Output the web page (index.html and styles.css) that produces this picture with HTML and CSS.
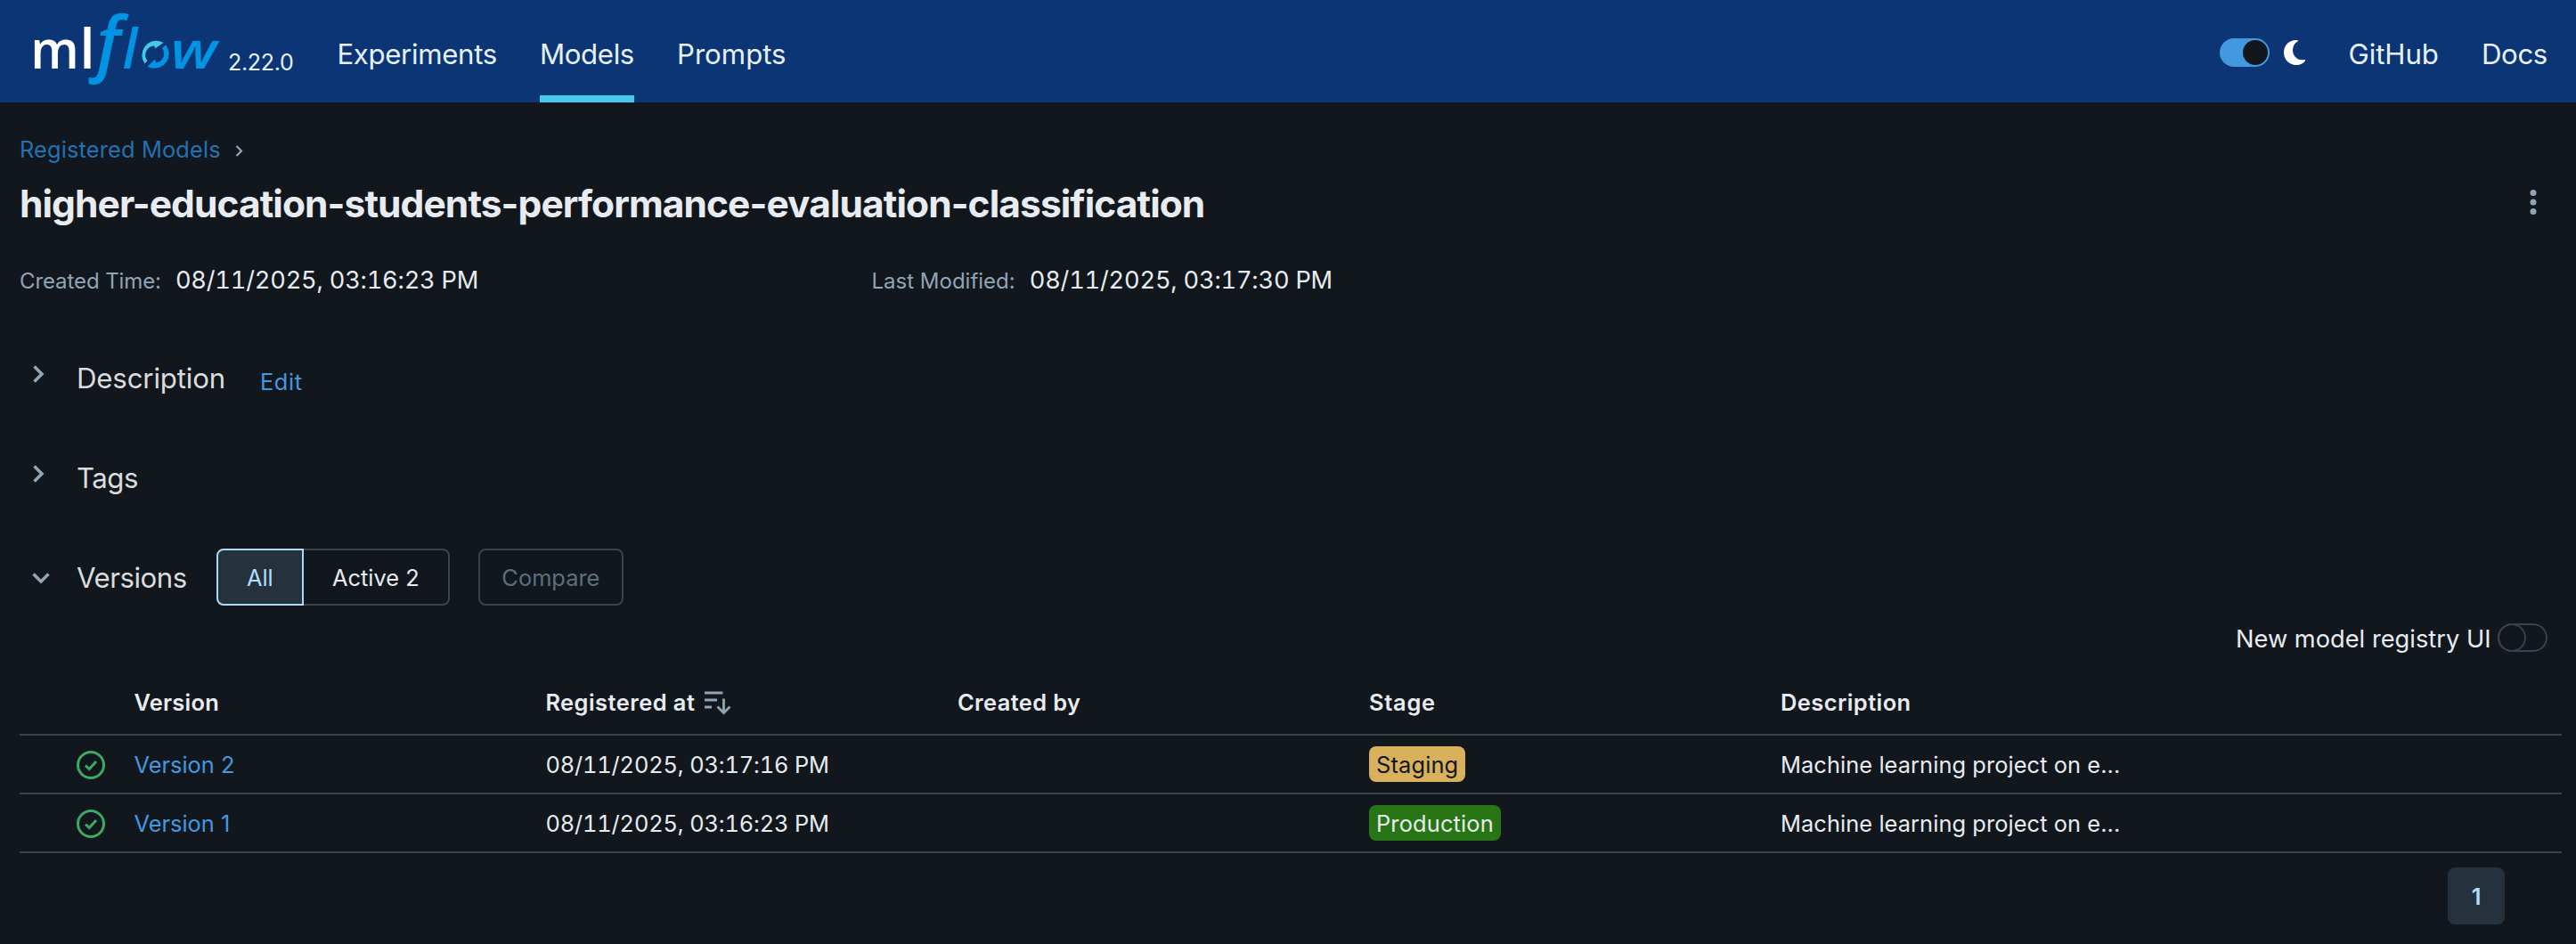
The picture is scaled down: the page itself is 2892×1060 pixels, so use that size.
FILE: index.html
```html
<!DOCTYPE html>
<html lang="en">
<head>
<meta charset="utf-8">
<title>MLflow - Registered Model</title>
<link rel="stylesheet" href="styles.css">
</head>
<body>
<header class="topbar">
  <svg class="logo" width="216" height="90" viewBox="34 10 216 90" role="img" aria-label="mlflow">
    <g font-family="'Open Sans', sans-serif" font-size="61" font-weight="600">
      <text class="logo-white" x="34.300" y="77" font-size="60" textLength="54.500" lengthAdjust="spacingAndGlyphs">m</text>
      <text class="logo-white" x="89.500" y="77">l</text>
      <text class="logo-blue" x="108.300" y="75.500" font-size="79" font-style="italic">f</text>
      <text class="logo-blue" x="137.500" y="77" font-style="italic">l</text>
      <text class="logo-blue" x="191.600" y="77" font-size="58" font-style="italic" textLength="52" lengthAdjust="spacingAndGlyphs">w</text>
    </g>
    <path fill="#43c9ed" d="M162.500 71.500A16.200 16.200 0 0 1 179.500 46.200L183.500 48L174 54.500L173.500 51.500A10.300 10.300 0 0 0 165.500 68.200Z"/>
    <path fill="#0194e2" d="M186.200 50.500A16.200 16.200 0 0 1 169.500 76.200L165.500 74.700L174 66.500L175 70.500A10.300 10.300 0 0 0 182 54Z"/>
  </svg>
  <span class="release">2.22.0</span>
  <nav class="nav">
    <a class="nav-link experiments">Experiments</a>
    <a class="nav-link models active">Models</a>
    <a class="nav-link prompts">Prompts</a>
  </nav>
  <div class="topbar-right">
    <span class="switch on"><span class="knob"></span></span>
    <svg class="moon" width="24" height="28" viewBox="0 0 24 28"><path fill="#fff" d="M14 0C5 0 0 6.500 0 14S5.500 28 14 28C18.500 28 22 26.300 24 23.300C24.300 22.500 23.800 22 23 22.100C15 23.500 10 17.500 10 11.500C10 7 12 3.500 15.500 1.500C16.500 .8 16 0 14 0Z"/></svg>
    <a class="nav-link github">GitHub</a>
    <a class="nav-link docs">Docs</a>
  </div>
</header>

<main class="page">
  <div class="breadcrumb">
    <a>Registered Models</a>
    <svg width="9" height="13" viewBox="0 0 9 13"><path d="M1.500 1L7 6.500L1.500 12" fill="none" stroke="#92a4b3" stroke-width="2.200"/></svg>
  </div>
  <div class="title-row">
    <h1>higher-education-students-performance-evaluation-classification</h1>
    <svg class="kebab" width="8" height="28" viewBox="0 0 8 28" fill="#92a4b3"><circle cx="4" cy="3.500" r="3.500"/><circle cx="4" cy="14" r="3.500"/><circle cx="4" cy="24.500" r="3.500"/></svg>
  </div>
  <div class="meta">
    <div class="meta-item"><span class="meta-label created">Created Time:</span><span class="meta-value">08/11/2025, 03:16:23 PM</span></div>
    <div class="meta-item"><span class="meta-label">Last Modified:</span><span class="meta-value">08/11/2025, 03:17:30 PM</span></div>
  </div>

  <section class="section">
    <span class="chevron right"><svg width="12" height="20" viewBox="0 0 12 20"><path d="M1.500 1.500L10 10L1.500 18.500" fill="none" stroke="#92a4b3" stroke-width="3.600"/></svg></span>
    <h2 class="description">Description</h2>
    <a class="edit">Edit</a>
  </section>
  <section class="section">
    <span class="chevron right"><svg width="12" height="20" viewBox="0 0 12 20"><path d="M1.500 1.500L10 10L1.500 18.500" fill="none" stroke="#92a4b3" stroke-width="3.600"/></svg></span>
    <h2 class="tags">Tags</h2>
  </section>
  <section class="section">
    <span class="chevron"><svg width="20" height="12" viewBox="0 0 20 12"><path d="M1.500 1.500L10 10L18.500 1.500" fill="none" stroke="#92a4b3" stroke-width="3.600"/></svg></span>
    <h2 class="versions">Versions</h2>
    <div class="segmented">
      <button class="btn all">All</button><button class="btn active-count">Active 2</button>
    </div>
    <button class="btn compare">Compare</button>
  </section>

  <div class="registry-toggle">
    <span>New model registry UI</span>
    <span class="switch"><span class="knob"></span></span>
  </div>

  <div class="table">
    <div class="row head">
      <span></span>
      <span class="th version">Version</span>
      <span class="th registered">Registered at
        <svg width="30" height="27" viewBox="0 0 30 27"><path d="M0 2h20.500M0 10h14M0 18h8" stroke="#92a4b3" stroke-width="3"/><path d="M21.500 8.500V25M14.500 17.500L21.500 24.500L28.500 17.500" fill="none" stroke="#92a4b3" stroke-width="2.800"/></svg>
      </span>
      <span class="th created-by">Created by</span>
      <span class="th stage">Stage</span>
      <span class="th desc">Description</span>
    </div>
    <div class="row">
      <svg class="check" width="32" height="32" viewBox="0 0 32 32" fill="none" stroke="#3caa60" stroke-width="3"><circle cx="16" cy="16" r="14.500"/><path d="M10 16.500L14.200 20.500L22 12"/></svg>
      <a class="link">Version 2</a>
      <span class="date">08/11/2025, 03:17:16 PM</span>
      <span></span>
      <span><span class="badge staging">Staging</span></span>
      <span class="text">Machine learning project on e...</span>
    </div>
    <div class="row">
      <svg class="check" width="32" height="32" viewBox="0 0 32 32" fill="none" stroke="#3caa60" stroke-width="3"><circle cx="16" cy="16" r="14.500"/><path d="M10 16.500L14.200 20.500L22 12"/></svg>
      <a class="link">Version 1</a>
      <span class="date">08/11/2025, 03:16:23 PM</span>
      <span></span>
      <span><span class="badge production">Production</span></span>
      <span class="text">Machine learning project on e...</span>
    </div>
  </div>
  <div class="pagination"><span class="page-number">1</span></div>
</main>
</body>
</html>
```
FILE: styles.css
```css
* { box-sizing: border-box; }
body {
  margin: 0;
  background: #11171d;
  color: #e8ecf0;
  font-family: Inter, sans-serif;
  font-size: 25.4px;
  line-height: 40px;
  white-space: nowrap;
}
h1, h2 { margin: 0; }
svg { display: block; flex: none; overflow: visible; }

/* Top bar */
.topbar {
  display: flex;
  height: 115px;
  padding: 0 32px 0 34px;
  background: #0b3574;
  color: #e7f1fb;
}
.logo { margin-top: 10px; }
.logo-white { fill: #fff; }
.logo-blue { fill: #0194e2; }
.release {
  width: 74px;
  margin: 0 48.400px 0 6px;
  font-size: 25px;
  line-height: 141px;
  letter-spacing: -.3px;
}
.nav { display: flex; gap: 48px; }
.nav-link {
  height: 115px;
  font-size: 31.200px;
  line-height: 122px;
}
.nav-link.active { box-shadow: inset 0 -8px #43c9ed; }
.experiments { letter-spacing: -.33px; }
.models { letter-spacing: -.35px; }
.prompts { letter-spacing: 0; }
.github { letter-spacing: -.069px; margin-left: 48.500px; }
.docs { letter-spacing: -.342px; margin-left: 48px; }
.topbar-right { display: flex; margin-left: auto; }
.topbar-right .switch { margin-top: 43px; }
.moon { margin: 45px 0 0 16px; }

.switch {
  display: block;
  width: 56px;
  height: 32px;
  border: 2px solid #37444f;
  border-radius: 16px;
}
.knob {
  display: block;
  width: 32px;
  height: 32px;
  margin: -2px;
  border: 2px solid #37444f;
  border-radius: 50%;
}
.switch.on { border-color: #4299e0; background: #4299e0; }
.switch.on .knob {
  width: 28px;
  height: 28px;
  margin: 0 0 0 24px;
  border: 0;
  background: #11171d;
}

/* Page heading */
.page { padding: 33px 16px 0 22px; }
.breadcrumb {
  display: flex;
  align-items: center;
  gap: 16px;
  height: 40px;
  color: #2272b4;
  letter-spacing: .14px;
}
.breadcrumb svg { margin-top: 2px; }
.title-row {
  display: flex;
  align-items: center;
  justify-content: space-between;
  height: 81px;
}
h1 {
  font-size: 42.500px;
  font-weight: 700;
  letter-spacing: -.93px;
  line-height: 82px;
}
.kebab { margin: 0 28px 3px 0; }
.meta {
  display: grid;
  grid-template-columns: 956.500px 1fr;
  margin-top: 26px;
}
.meta-item { display: flex; align-items: baseline; gap: 16px; }
.meta-label { color: #92a4b3; font-size: 24px; }
.meta-label.created { letter-spacing: -.1px; }
.meta-value {
  font-size: 27.200px;
  letter-spacing: -.2px;
  font-variant-numeric: tabular-nums;
}

/* Collapsible sections */
.section { display: flex; align-items: center; height: 64px; margin-bottom: 48px; }
.meta + .section { margin-top: 56px; }
.chevron { width: 64px; padding: 2px 0 0 14px; }
.chevron.right { padding: 0 0 8px 15px; }
h2 {
  padding-top: 1px;
  color: #dbdcdd;
  font-size: 31.200px;
  font-weight: 400;
}
.description { letter-spacing: -.16px; }
.tags { letter-spacing: -.495px; }
.versions { letter-spacing: -.45px; margin-right: 33px; }
.edit { padding-top: 9px; margin-left: 39px; color: #4299e0; letter-spacing: .6px; }
.segmented { display: flex; }
.btn {
  height: 64px;
  padding: 2px 0 0;
  border: 2px solid #37444f;
  background: none;
  color: #e8ecf0;
  font: inherit;
}
.all {
  width: 98px;
  border-color: #a9d9fb;
  border-radius: 8px 0 0 8px;
  background: #25323e;
  color: #b2ddfb;
}
.active-count { width: 164px; border-left: 0; border-radius: 0 8px 8px 0; }
.compare { width: 163px; margin-left: 32px; border-radius: 8px; color: #5c6f80; }
.section:has(.segmented) { margin-bottom: 20px; }
.registry-toggle {
  display: flex;
  align-items: center;
  justify-content: flex-end;
  gap: 7.500px;
  height: 32px;
  padding-right: 16px;
  font-size: 27.200px;
  letter-spacing: .03px;
}
.registry-toggle > span:first-child { padding-top: 3px; }

/* Versions table */
.row {
  display: grid;
  grid-template-columns: 129px repeat(4, 462px) 1fr;
  align-items: center;
  height: 66px;
  border-bottom: 2px solid #37444f;
}
.row.head { height: 94px; padding-top: 22px; }
.th { font-weight: 600; }
.version { margin-left: -.6px; letter-spacing: .274px; }
.registered { display: flex; align-items: center; gap: 10.500px; margin-left: -.6px; letter-spacing: .474px; }
.created-by { letter-spacing: .4px; }
.stage { letter-spacing: .734px; }
.desc { letter-spacing: .463px; }
.check { margin: 1px 0 0 64px; }
.link { margin-left: -.6px; padding-top: 2px; color: #4299e0; }
.date { margin-left: -.6px; padding-top: 2px; letter-spacing: -.16px; font-variant-numeric: tabular-nums; }
.text { padding-top: 2px; letter-spacing: .074px; }
.badge {
  display: block;
  width: max-content;
  height: 40px;
  padding: 0 8px;
  border-radius: 8px;
  line-height: 42px;
  letter-spacing: .15px;
}
.staging { background: #d9b15c; color: #11171d; }
.production { background: #277514; }
.pagination { display: flex; justify-content: flex-end; padding: 16px 64px 0 0; }
.page-number {
  width: 64px;
  height: 64px;
  border-radius: 8px;
  background: #25323e;
  color: #b2ddfb;
  font-weight: 600;
  line-height: 66px;
  text-align: center;
}
```
